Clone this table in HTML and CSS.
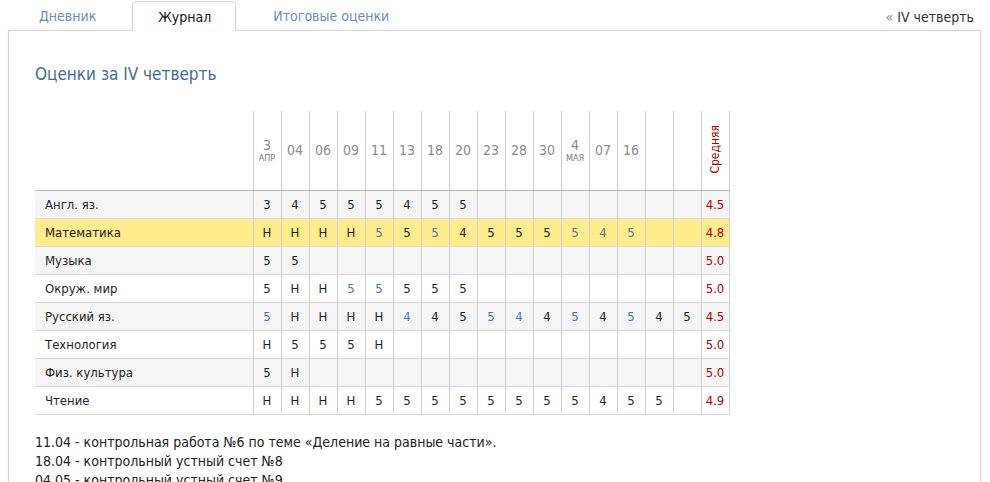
FILE: index.html
```html
<!DOCTYPE html>
<html lang="ru">
<head>
<meta charset="utf-8">
<title>Журнал</title>
<link rel="stylesheet" href="styles.css">
</head>
<body>
<div class="topbar">
  <nav class="tabs">
    <a class="tab">Дневник</a>
    <a class="tab active">Журнал</a>
    <a class="tab">Итоговые оценки</a>
  </nav>
  <div class="period"><span class="laquo">«</span> IV четверть</div>
</div>
<main class="panel">
  <h1 class="title">Оценки за IV четверть</h1>
  <table class="journal">
    <colgroup>
      <col class="c-name">
      <col class="c-g"><col class="c-g"><col class="c-g"><col class="c-g">
      <col class="c-g"><col class="c-g"><col class="c-g"><col class="c-g">
      <col class="c-g"><col class="c-g"><col class="c-g"><col class="c-g">
      <col class="c-g"><col class="c-g"><col class="c-g"><col class="c-g">
      <col class="c-g">
    </colgroup>
    <thead>
      <tr>
        <th class="h-name"></th>
        <th class="d">3<span class="mon">АПР</span></th>
        <th class="d">04</th><th class="d">06</th><th class="d">09</th><th class="d">11</th>
        <th class="d">13</th><th class="d">18</th><th class="d">20</th><th class="d">23</th>
        <th class="d">28</th><th class="d">30</th>
        <th class="d">4<span class="mon">МАЯ</span></th>
        <th class="d">07</th><th class="d">16</th><th class="d"></th><th class="d"></th>
        <th class="avg-h"><span class="vert">Средняя</span></th>
      </tr>
    </thead>
    <tbody>
      <tr class="odd">
        <td class="name">Англ. яз.</td>
        <td>3</td><td>4</td><td>5</td><td>5</td><td>5</td><td>4</td><td>5</td><td>5</td>
        <td></td><td></td><td></td><td></td><td></td><td></td><td></td><td></td>
        <td class="avg">4.5</td>
      </tr>
      <tr class="hl">
        <td class="name">Математика</td>
        <td>Н</td><td>Н</td><td>Н</td><td>Н</td><td class="b">5</td><td>5</td><td class="b">5</td><td>4</td>
        <td>5</td><td>5</td><td>5</td><td class="b">5</td><td class="b">4</td><td class="b">5</td><td></td><td></td>
        <td class="avg">4.8</td>
      </tr>
      <tr class="odd">
        <td class="name">Музыка</td>
        <td>5</td><td>5</td><td></td><td></td><td></td><td></td><td></td><td></td>
        <td></td><td></td><td></td><td></td><td></td><td></td><td></td><td></td>
        <td class="avg">5.0</td>
      </tr>
      <tr>
        <td class="name">Окруж. мир</td>
        <td>5</td><td>Н</td><td>Н</td><td class="b">5</td><td class="b">5</td><td>5</td><td>5</td><td>5</td>
        <td></td><td></td><td></td><td></td><td></td><td></td><td></td><td></td>
        <td class="avg">5.0</td>
      </tr>
      <tr class="odd">
        <td class="name">Русский яз.</td>
        <td class="b">5</td><td>Н</td><td>Н</td><td>Н</td><td>Н</td><td class="b">4</td><td>4</td><td>5</td>
        <td class="b">5</td><td class="b">4</td><td>4</td><td class="b">5</td><td>4</td><td class="b">5</td><td>4</td><td>5</td>
        <td class="avg">4.5</td>
      </tr>
      <tr>
        <td class="name">Технология</td>
        <td>Н</td><td>5</td><td>5</td><td>5</td><td>Н</td><td></td><td></td><td></td>
        <td></td><td></td><td></td><td></td><td></td><td></td><td></td><td></td>
        <td class="avg">5.0</td>
      </tr>
      <tr class="odd">
        <td class="name">Физ. культура</td>
        <td>5</td><td>Н</td><td></td><td></td><td></td><td></td><td></td><td></td>
        <td></td><td></td><td></td><td></td><td></td><td></td><td></td><td></td>
        <td class="avg">5.0</td>
      </tr>
      <tr>
        <td class="name">Чтение</td>
        <td>Н</td><td>Н</td><td>Н</td><td>Н</td><td>5</td><td>5</td><td>5</td><td>5</td>
        <td>5</td><td>5</td><td>5</td><td>5</td><td>4</td><td>5</td><td>5</td><td></td>
        <td class="avg">4.9</td>
      </tr>
    </tbody>
  </table>
  <div class="notes">
    <p>11.04 - контрольная работа №6 по теме «Деление на равные части».</p>
    <p>18.04 - контрольный устный счет №8</p>
    <p>04.05 - контрольный устный счет №9</p>
  </div>
</main>
</body>
</html>
```
FILE: styles.css
```css
html, body {
  margin: 0;
  padding: 0;
  background: #fff;
}
body {
  font-family: "DejaVu Sans Condensed", "DejaVu Sans", "Liberation Sans", sans-serif;
  color: #222;
  overflow: hidden;
  height: 482px;
}
.topbar {
  display: flex;
  justify-content: space-between;
  align-items: flex-end;
  height: 30px;
  padding: 0 16px 0 13px;
  position: relative;
  z-index: 2;
}
.tabs {
  display: flex;
  gap: 11px;
  height: 29px;
}
.tab {
  display: flex;
  align-items: center;
  padding: 0 24px 0 25px;
  font-size: 14px;
  color: #6f8cbb;
  border: 1px solid transparent;
  border-bottom: none;
  border-radius: 5px 5px 0 0;
}
.tab.active {
  color: #111;
  background: #fff;
  border-color: #d4d4d4;
  margin-bottom: -1px;
  box-sizing: border-box;
  height: 30px;
}
.period {
  font-size: 14px;
  color: #333;
  align-self: center;
  padding-top: 3px;
}
.laquo {
  color: #6f8cbb;
}
.panel {
  margin: 0 9px 0 8px;
  border: 1px solid #d8d8d8;
  border-bottom: none;
  box-shadow: 0 0 3px rgba(0,0,0,0.08);
  padding: 32px 26px 0 26px;
  height: 460px;
  box-sizing: border-box;
}
.title {
  margin: 0;
  font-size: 17px;
  font-weight: normal;
  color: #4a6a94;
  line-height: 22px;
  height: 48px;
}
.journal {
  border-collapse: collapse;
  table-layout: fixed;
  width: 694px;
  font-size: 13px;
}
.c-name { width: 218px; }
.c-g { width: 28px; }
.journal th {
  height: 79px;
  padding: 0;
  font-weight: normal;
  border-bottom: 1px solid #b8b8b8;
  vertical-align: middle;
}
.journal th.d, .journal th.avg-h {
  border-left: 1px solid #d0d0d0;
  color: #8a8a8a;
  font-size: 14px;
  line-height: 15px;
}
.journal th.avg-h {
  border-right: 1px solid #d0d0d0;
}
.mon {
  display: block;
  font-size: 9px;
  line-height: 11px;
  color: #777;
}
.vert {
  display: inline-block;
  writing-mode: vertical-rl;
  transform: rotate(180deg);
  color: #b00000;
  font-size: 12px;
}
.journal td {
  height: 27px;
  padding: 0;
  text-align: center;
  border-bottom: 1px solid #d8d8d8;
  border-left: 1px solid #d0d0d0;
  color: #1e1e1e;
}
.journal td.name {
  text-align: left;
  padding-left: 10px;
  border-left: none;
}
.journal td.avg {
  color: #b00000;
  border-right: 1px solid #d0d0d0;
}
.journal td.b {
  color: #4e79a7;
}
.journal tr.odd td {
  background: #f5f5f5;
}
.journal tr.hl td {
  background: #ffec8c;
}
.notes {
  margin-top: 18px;
  font-size: 14px;
  line-height: 19px;
  color: #222;
}
.notes p {
  margin: 0;
}
```
